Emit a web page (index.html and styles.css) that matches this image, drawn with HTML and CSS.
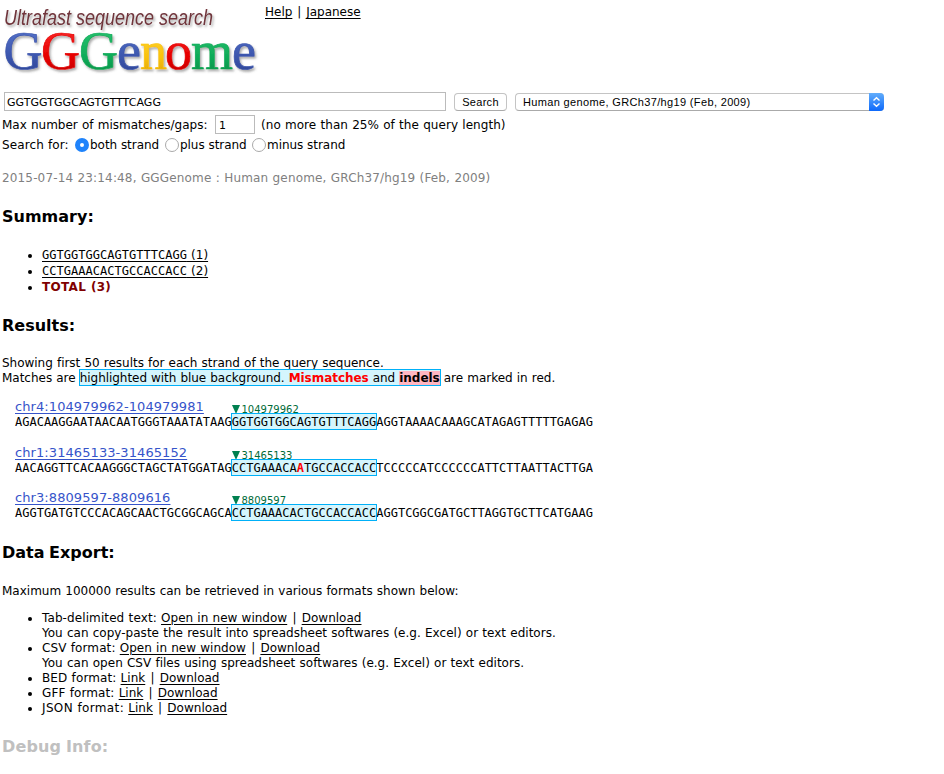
FILE: index.html
```html
<!DOCTYPE html>
<html lang="en">
<head>
<meta charset="utf-8">
<title>GGGenome</title>
<link rel="stylesheet" href="styles.css">
</head>
<body>
<header class="top">
  <svg class="logo" width="262" height="92" viewBox="0 0 262 92" role="img" aria-label="GGGenome">
    <defs>
      <filter id="shade" x="-5%" y="-20%" width="115%" height="140%"><feDropShadow dx="1.5" dy="2" stdDeviation="1" flood-color="#555" flood-opacity=".5"/></filter>
      <linearGradient id="blue" x2="0" y2="1"><stop stop-color="#5d7bd0"/><stop offset=".6" stop-color="#3b55ad"/><stop offset="1" stop-color="#2a408c"/></linearGradient>
      <linearGradient id="red" x2="0" y2="1"><stop stop-color="#f33"/><stop offset=".6" stop-color="#e60000"/><stop offset="1" stop-color="#b00000"/></linearGradient>
      <linearGradient id="green" x2="0" y2="1"><stop stop-color="#2fc777"/><stop offset=".6" stop-color="#0fab58"/><stop offset="1" stop-color="#078542"/></linearGradient>
      <linearGradient id="gold" x2="0" y2="1"><stop stop-color="#ffdb42"/><stop offset=".6" stop-color="#fac20c"/><stop offset="1" stop-color="#d69d00"/></linearGradient>
    </defs>
    <g filter="url(#shade)">
      <text class="tagline" x="4" y="25" textLength="209" lengthAdjust="spacingAndGlyphs">Ultrafast sequence search</text>
      <g class="word">
        <text x="3.5" y="69" fill="url(#blue)" stroke="#3b55ad">G</text>
        <text x="41" y="69" fill="url(#red)" stroke="#e60000">G</text>
        <text x="79" y="69" fill="url(#green)" stroke="#0fab58">G</text>
        <text x="117" y="69" fill="url(#blue)" stroke="#3b55ad">e</text>
        <text x="140" y="69" fill="url(#gold)" stroke="#fac20c">n</text>
        <text x="165" y="69" fill="url(#red)" stroke="#e60000">o</text>
        <text x="191" y="69" fill="url(#green)" stroke="#0fab58">m</text>
        <text x="232" y="69" fill="url(#blue)" stroke="#3b55ad">e</text>
      </g>
    </g>
  </svg>
  <nav class="nav"><a href="#">Help</a> <span class="bar">|</span> <a href="#">Japanese</a></nav>
</header>
<form class="form">
  <div class="query-row">
    <input class="query" type="text" value="GGTGGTGGCAGTGTTTCAGG">
    <button class="search" type="button">Search</button>
    <div class="select"><span class="select-text">Human genome, GRCh37/hg19 (Feb, 2009)</span><span class="arrows"><svg width="15" height="18" viewBox="0 0 15 18" fill="none" stroke="#fff" stroke-width="1.4"><path d="M4.5 7.5 7.5 4.7l3 2.8M4.5 10.5l3 2.8 3-2.8"/></svg></span></div>
  </div>
  <div class="gap-row"><span class="gap-label">Max number of mismatches/gaps:</span><input class="gaps" type="text" value="1"><span class="gap-note">(no more than 25% of the query length)</span></div>
  <div class="strand-row"><span class="strand-label">Search for:</span><i class="radio on"></i><span class="opt both">both strand</span><i class="radio"></i><span class="opt plus">plus strand</span><i class="radio"></i><span class="opt">minus strand</span></div>
</form>
<p class="stamp">2015-07-14 23:14:48, GGGenome : Human genome, GRCh37/hg19 (Feb, 2009)</p>
<h2>Summary:</h2>
<ul class="summary">
  <li><a href="#"><span class="mono">GGTGGTGGCAGTGTTTCAGG</span> (1)</a></li>
  <li><a href="#"><span class="mono">CCTGAAACACTGCCACCACC</span> (2)</a></li>
  <li><b class="total">TOTAL (3)</b></li>
</ul>
<h2>Results:</h2>
<p class="intro">Showing first 50 results for each strand of the query sequence.<br>Matches are <span class="hit">highlighted with blue background. <b class="mis">Mismatches</b> and <b class="indel">indels</b></span> are marked in red.</p>
<section class="results">
  <article class="result">
    <div class="head"><a class="locus" href="#">chr4:104979962-104979981</a><span class="pos"><i class="tri"></i>104979962</span></div>
    <div class="seq">AGACAAGGAATAACAATGGGTAAATATAAG<span class="hit">GGTGGTGGCAGTGTTTCAGG</span>AGGTAAAACAAAGCATAGAGTTTTTGAGAG</div>
  </article>
  <article class="result">
    <div class="head"><a class="locus" href="#">chr1:31465133-31465152</a><span class="pos"><i class="tri"></i>31465133</span></div>
    <div class="seq">AACAGGTTCACAAGGGCTAGCTATGGATAG<span class="hit">CCTGAAACA<b class="mis">A</b>TGCCACCACC</span>TCCCCCATCCCCCCATTCTTAATTACTTGA</div>
  </article>
  <article class="result">
    <div class="head"><a class="locus" href="#">chr3:8809597-8809616</a><span class="pos"><i class="tri"></i>8809597</span></div>
    <div class="seq">AGGTGATGTCCCACAGCAACTGCGGCAGCA<span class="hit">CCTGAAACACTGCCACCACC</span>AGGTCGGCGATGCTTAGGTGCTTCATGAAG</div>
  </article>
</section>
<h2>Data Export:</h2>
<p class="export-note">Maximum 100000 results can be retrieved in various formats shown below:</p>
<ul class="export">
  <li><span class="name">Tab-delimited text:</span> <a href="#">Open in new window</a> <span class="bar">|</span> <a href="#">Download</a><br>You can copy-paste the result into spreadsheet softwares (e.g. Excel) or text editors.</li>
  <li><span class="name">CSV format:</span> <a href="#">Open in new window</a> <span class="bar">|</span> <a href="#">Download</a><br>You can open CSV files using spreadsheet softwares (e.g. Excel) or text editors.</li>
  <li><span class="name">BED format:</span> <a href="#">Link</a> <span class="bar">|</span> <a href="#">Download</a></li>
  <li><span class="name">GFF format:</span> <a href="#">Link</a> <span class="bar">|</span> <a href="#">Download</a></li>
  <li><span class="name json">JSON format:</span> <a href="#">Link</a> <span class="bar">|</span> <a href="#">Download</a></li>
</ul>
<h2 class="debug">Debug Info:</h2>
</body>
</html>
```
FILE: styles.css
```css
* { box-sizing: border-box; }
body { margin: 0 2px; background: #fff; color: #000; font: 12px/15px Verdana, "DejaVu Sans", sans-serif; word-spacing: .35px; overflow: hidden; white-space: nowrap; }
p, ul { margin: 0; }
a { color: inherit; text-decoration: underline; text-underline-offset: 1.5px; text-decoration-thickness: 1px; }
.bar { margin: 0 .7px; }
.top { display: flex; height: 92px; }
.logo { flex: none; margin-left: -2px; }
.tagline { font: italic 22.5px "Liberation Sans Narrow", "Liberation Sans", sans-serif; fill: #70343b; word-spacing: 0; }
.word { font: 54px "Liberation Serif", serif; stroke-width: .7; }
.nav { padding: 5px 0 0 3px; }
.query-row { display: flex; height: 20px; word-spacing: 0; }
.query { width: 442px; height: 19px; margin: 0 8px 0 2px; padding: 1px 2px 0; border: 1px solid #bbb; font: 11px "DejaVu Sans", sans-serif; letter-spacing: .05px; outline: 0; }
.search { width: 53px; height: 18px; margin: 1px 8px 0 0; padding: 0; border: 1px solid #c4c4c4; border-bottom-color: #aaa; border-radius: 4px; background: #fff; color: #000; font: 11px/15px "Liberation Sans", sans-serif; letter-spacing: .3px; }
.select { display: flex; width: 369px; height: 18px; margin-top: 1px; border: 1px solid #c4c4c4; border-bottom-color: #aaa; border-right: 0; border-radius: 4px; }
.select-text { flex: 1; padding-left: 7px; font: 11px/17px "Liberation Sans", sans-serif; letter-spacing: .35px; }
.arrows { width: 15px; height: 18px; margin-top: -1px; border-radius: 0 4px 4px 0; background: linear-gradient(#62adfb, #0d69fb); }
.arrows svg { display: block; }
.gap-row { display: flex; height: 22px; padding-top: 3px; line-height: 20px; }
.gap-label { width: 213px; }
.gap-note { letter-spacing: .05px; }
.gaps { width: 40px; height: 19px; margin-right: 6px; padding: 2px 3px 0; border: 1px solid #bbb; font: 11px "DejaVu Sans", sans-serif; }
.strand-row { display: flex; align-items: center; height: 22px; word-spacing: 0; }
.strand-label { width: 73px; letter-spacing: .12px; }
.radio { width: 14px; height: 14px; margin-right: 1px; border: 1px solid #aaa; border-radius: 50%; background: #fff; }
.radio.on { border: 5px solid #1f83fb; }
.opt { letter-spacing: -.04px; }
.both { width: 75px; }
.plus { width: 72px; }
.stamp { padding-top: 15px; color: #808080; letter-spacing: .15px; }
h2 { margin: 20px 0; font-size: 16px; line-height: 21px; word-spacing: -1px; }
ul { padding-left: 40px; }
.summary { line-height: 16px; }
.mono, .seq { font-family: "DejaVu Sans Mono", monospace; }
.mono { letter-spacing: .02px; }
.total { color: #800000; letter-spacing: .3px; }
.intro { letter-spacing: -.02px; }
.hit { padding-top: 1px; background: #d4f5fd; outline: 1px solid #00b0f8; }
.intro .hit { letter-spacing: -.05px; }
.mis { color: #f00; }
.indel { background: #ffb6c1; }
.results { display: grid; grid-auto-rows: 31.5px; row-gap: 14px; padding: 14px 0 0 13px; margin-bottom: 19px; }
.head { display: flex; height: 15px; }
.locus { width: 217px; color: #3654ca; font-size: 13px; line-height: 14px; letter-spacing: .08px; }
.pos { display: flex; color: #006b38; font-size: 10px; line-height: 19px; }
.tri { width: 0; height: 0; margin: 5px 1.5px 0 0; border: solid transparent; border-width: 9px 4.5px 0; border-top-color: #008050; }
.results + h2 { margin: 19px 0 21px; }
.export { padding-top: 12px; letter-spacing: .02px; }
.name { letter-spacing: .1px; }
.json { letter-spacing: .35px; }
.export .bar { margin: 0 1px; }
.debug { color: #c0c0c0; letter-spacing: .15px; }
```
